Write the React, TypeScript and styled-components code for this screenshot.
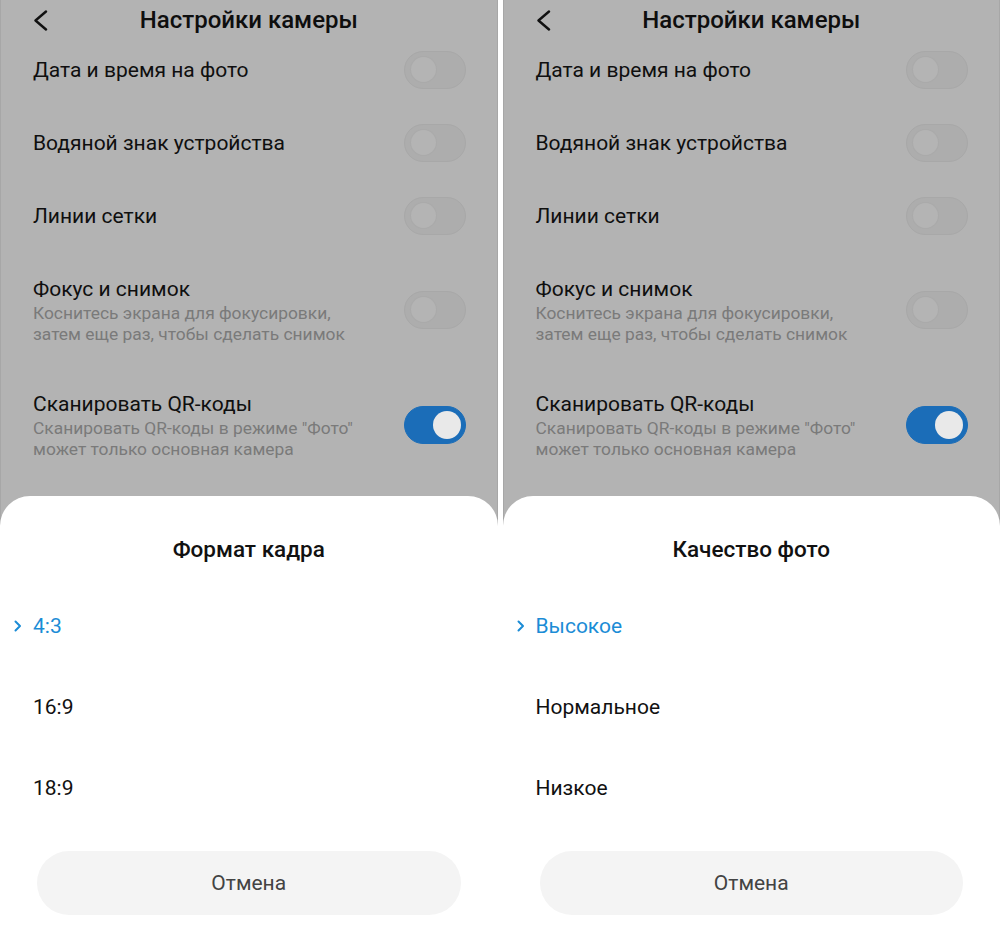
import React from 'react';
import styled, {createGlobalStyle} from 'styled-components';

const GlobalStyle = createGlobalStyle`
  html, body {
    margin: 0;
    padding: 0;
    background: #ffffff;
  }
  body {
    font-family: Roboto, "Noto Sans", "Liberation Sans", sans-serif;
  }
`;

const Page = styled.div`
  display: flex;
  gap: 5px;
  width: 1000px;
  height: 930px;
  background: #ffffff;
`;

const Phone = styled.div`
  flex: 1;
  display: flex;
  flex-direction: column;
  background: #b3b3b3;
  box-shadow: inset 1px 0 0 #a7a7a7, inset -1px 0 0 #a7a7a7;
  overflow: hidden;
`;

const Header = styled.div`
  display: grid;
  grid-template-columns: 1fr auto 1fr;
  align-items: center;
  height: 33px;
  padding: 0 33px;
`;

const BackButton = styled.div`
  display: flex;
  align-items: center;
  height: 25px;
  padding-top: 8px;
`;

const HeaderTitle = styled.div`
  font-size: 24px;
  font-weight: 500;
  line-height: 25px;
  color: #0e0e0e;
  padding-top: 8px;
`;

const SettingsList = styled.div`
  display: flex;
  flex-direction: column;
`;

const SettingRow = styled.div`
  display: flex;
  align-items: center;
  justify-content: space-between;
  padding: 0 32px 0 33px;
`;

const SettingText = styled.div`
  display: flex;
  flex-direction: column;
  padding: 22.5px 0;
`;

const SettingTitle = styled.div`
  font-size: 21px;
  line-height: 28px;
  color: #0f0f0f;
`;

const SettingHint = styled.div`
  font-size: 17.4px;
  line-height: 21px;
  color: #7a7a7a;
`;

const Track = styled.div<{$on: boolean}>`
  flex: none;
  display: flex;
  align-items: center;
  justify-content: ${p => (p.$on ? 'flex-end' : 'flex-start')};
  box-sizing: border-box;
  width: 62px;
  height: 38px;
  padding: 0 ${p => (p.$on ? '4px' : '6px')};
  border-radius: 19px;
  background: ${p => (p.$on ? '#1b6db8' : '#adadad')};
  border: 1.5px solid ${p => (p.$on ? '#1b6db8' : '#a8a8a8')};
`;

const Knob = styled.div<{$on: boolean}>`
  width: ${p => (p.$on ? '28px' : '25px')};
  height: ${p => (p.$on ? '28px' : '25px')};
  border-radius: 50%;
  background: ${p => (p.$on ? '#e9e9e9' : '#b4b4b4')};
  box-shadow: ${p => (p.$on ? 'none' : '0 0 0 1px #aaaaaa')};
`;

const Sheet = styled.div`
  margin-top: auto;
  height: 434px;
  display: flex;
  flex-direction: column;
  background: #ffffff;
  border-radius: 30px 30px 0 0;
`;

const SheetTitle = styled.div`
  padding-top: 40px;
  font-size: 22.5px;
  font-weight: 500;
  line-height: 26px;
  text-align: center;
  color: #111111;
`;

const OptionList = styled.div`
  display: flex;
  flex-direction: column;
  margin-top: 23.5px;
`;

const Option = styled.div<{$selected: boolean}>`
  display: flex;
  align-items: center;
  height: 81px;
  padding-left: 14px;
  font-size: 21px;
  color: ${p => (p.$selected ? '#1b8cd6' : '#111111')};
`;

const Marker = styled.div`
  display: flex;
  align-items: center;
  width: 19px;
`;

const CancelButton = styled.div`
  display: flex;
  align-items: center;
  justify-content: center;
  height: 64px;
  margin: 22.5px 37px 0;
  border-radius: 32px;
  background: #f4f4f4;
  font-size: 21px;
  color: #434343;
`;

interface Setting {
  title: string;
  hint?: string[];
  on: boolean;
}

const settings: Setting[] = [
  {title: 'Дата и время на фото', on: false},
  {title: 'Водяной знак устройства', on: false},
  {title: 'Линии сетки', on: false},
  {
    title: 'Фокус и снимок',
    hint: ['Коснитесь экрана для фокусировки,', 'затем еще раз, чтобы сделать снимок'],
    on: false
  },
  {
    title: 'Сканировать QR-коды',
    hint: ['Сканировать QR-коды в режиме "Фото"', 'может только основная камера'],
    on: true
  }
];

const BackIcon = () => <svg width="15" height="21" viewBox="0 0 15 21">
  <polyline points="13,1.5 2.5,10.5 13,19.5" fill="none" stroke="#111" strokeWidth="2.4"
            strokeLinecap="round" strokeLinejoin="round"/>
</svg>;

const SelectedIcon = () => <svg width="8" height="12" viewBox="0 0 8 12">
  <polyline points="1.5,1.5 6,6 1.5,10.5" fill="none" stroke="#1b8cd6" strokeWidth="2"
            strokeLinecap="round" strokeLinejoin="round"/>
</svg>;

const CameraScreen = ({title, options}: {title: string; options: string[]}) =>
  <Phone>
    <Header>
      <BackButton><BackIcon/></BackButton>
      <HeaderTitle>Настройки камеры</HeaderTitle>
      <div/>
    </Header>
    <SettingsList>
      {settings.map(setting => <SettingRow key={setting.title}>
        <SettingText>
          <SettingTitle>{setting.title}</SettingTitle>
          {setting.hint && setting.hint.map(line => <SettingHint key={line}>{line}</SettingHint>)}
        </SettingText>
        <Track $on={setting.on}><Knob $on={setting.on}/></Track>
      </SettingRow>)}
    </SettingsList>
    <Sheet>
      <SheetTitle>{title}</SheetTitle>
      <OptionList>
        {options.map((option, i) => <Option key={option} $selected={i === 0}>
          <Marker>{i === 0 && <SelectedIcon/>}</Marker>
          {option}
        </Option>)}
      </OptionList>
      <CancelButton>Отмена</CancelButton>
    </Sheet>
  </Phone>;

export default function App() {
  return <>
    <GlobalStyle/>
    <Page>
      <CameraScreen title="Формат кадра" options={['4:3', '16:9', '18:9']}/>
      <CameraScreen title="Качество фото" options={['Высокое', 'Нормальное', 'Низкое']}/>
    </Page>
  </>;
}
